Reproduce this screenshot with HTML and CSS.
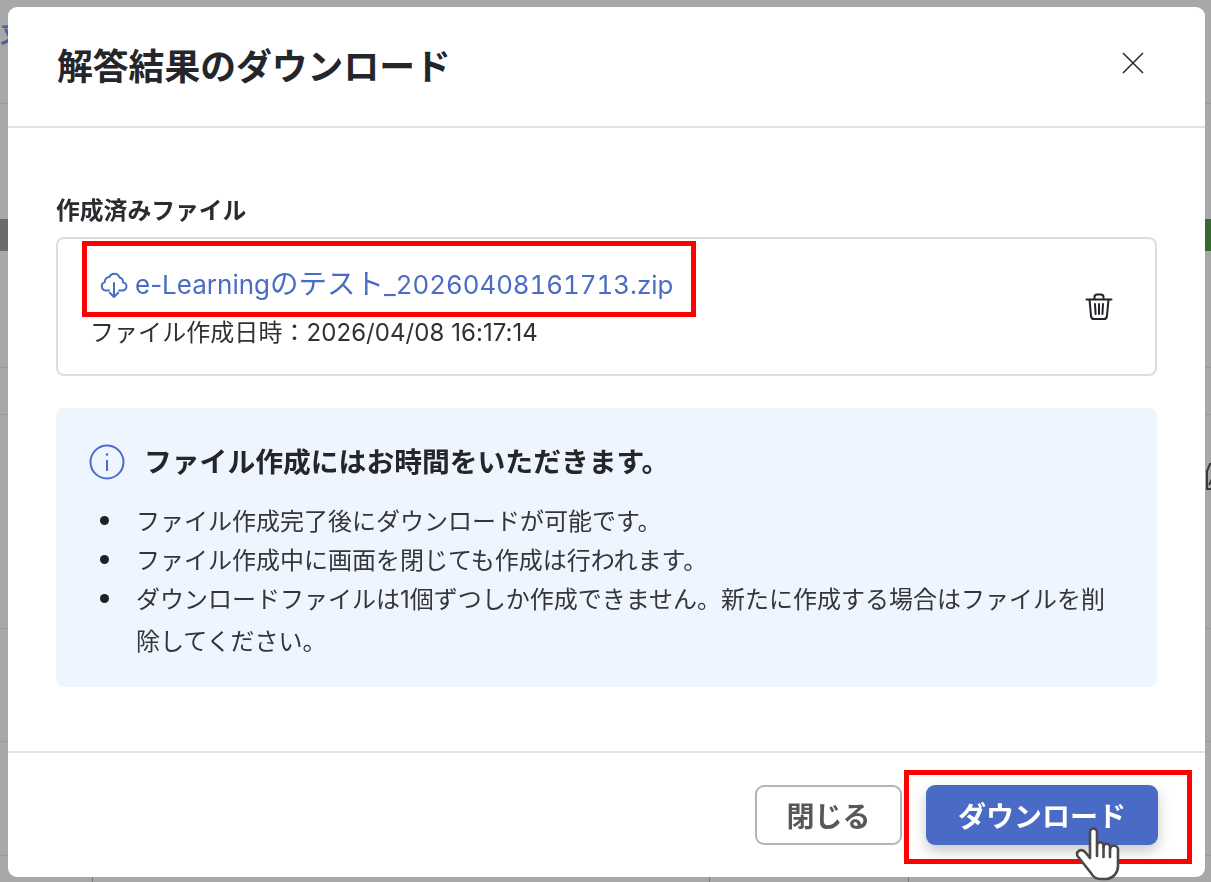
FILE: index.html
```html
<!DOCTYPE html>
<html lang="ja">
<head>
<meta charset="utf-8">
<title>解答結果のダウンロード</title>
<link rel="stylesheet" href="styles.css">
</head>
<body>
<div class="backdrop">
  <span class="bg-line bg-line-1"></span>
  <span class="bg-line bg-line-2"></span>
  <span class="bg-line bg-line-3"></span>
  <span class="bg-line bg-line-4"></span>
  <span class="bg-line bg-line-5"></span>
  <span class="bg-line bg-line-6"></span>
  <span class="bg-tick bg-tick-1"></span>
  <span class="bg-tick bg-tick-2"></span>
  <span class="bg-tick bg-tick-3"></span>
  <span class="bg-band bg-band-left"></span>
  <span class="bg-band bg-band-right"></span>
  <span class="bg-char">又</span>
  <svg class="bg-icon" viewBox="0 0 12 28" width="12" height="28" fill="none" stroke="#3a3b3e" stroke-width="2"><path d="M12 1H5L2 8v18h10M4 22l4-8 4 8"/></svg>
  <section class="modal">
    <header class="modal-header">
      <h1 class="modal-title">解答結果のダウンロード</h1>
      <svg class="close-icon" viewBox="0 0 24 24" width="24" height="24" fill="none" stroke="#2b2d31" stroke-width="1.6"><path d="M2 2 22 22M22 2 2 22"/></svg>
    </header>
    <div class="modal-body">
      <h2 class="field-label">作成済みファイル</h2>
      <div class="file-card">
        <div class="file-info">
          <a class="file-link">
            <svg class="cloud-icon" viewBox="0 0 28 28" width="28" height="28" fill="none" stroke="#4a6cc6" stroke-width="2" stroke-linecap="round" stroke-linejoin="round"><path d="M9 20.500H6a4.300 4.300 0 0 1-1.200-8.400A4.600 4.600 0 0 1 9.300 7 5.500 5.500 0 0 1 19.500 7.500a4.600 4.600 0 0 1 3.500 4.700 4.200 4.200 0 0 1-1.500 8.300H19"/><path d="M14 13v14M9.800 22.800 14 27l4.200-4.200"/></svg>
            <span class="file-name">e-Learning<span class="file-name-ja">のテスト</span><span class="file-name-num">_20260408161713.zip</span></span>
          </a>
          <p class="file-date">ファイル作成日時：2026/04/08 16:17:14</p>
        </div>
        <svg class="trash-icon" viewBox="0 0 28 28" width="28" height="28" fill="none" stroke="#1f2126" stroke-width="2" stroke-linecap="round" stroke-linejoin="round"><path d="M1.500 6.500h25M4.500 6.500l1.600 17a3 3 0 0 0 3 2.500h9.800a3 3 0 0 0 3-2.500l1.600-17M9.500 6V4a2.500 2.500 0 0 1 2.500-2.500h4A2.500 2.500 0 0 1 18.500 4v2M10 11l.6 10M14 11v10M18 11l-.6 10"/></svg>
      </div>
      <div class="notice">
        <div class="notice-head">
          <svg class="info-icon" viewBox="0 0 36 36" width="36" height="36" fill="none" stroke="#4a6cc6" stroke-width="2"><circle cx="18" cy="18" r="16.500"/><path d="M18 16v11"/><circle cx="18" cy="10.500" r="1.300" fill="#4a6cc6" stroke="none"/></svg>
          <strong class="notice-title">ファイル作成にはお時間をいただきます。</strong>
        </div>
        <ul class="notice-list">
          <li>ファイル作成完了後にダウンロードが可能です。</li>
          <li>ファイル作成中に画面を閉じても作成は行われます。</li>
          <li>ダウンロードファイルは1個ずつしか作成できません。新たに作成する場合はファイルを削除してください。</li>
        </ul>
      </div>
    </div>
    <footer class="modal-footer">
      <button class="btn btn-close">閉じる</button>
      <button class="btn btn-primary">ダウンロード</button>
    </footer>
  </section>
  <span class="highlight highlight-file"></span>
  <span class="highlight highlight-button"></span>
  <svg class="hand-cursor" viewBox="0 0 46 56" width="46" height="56" stroke="#4a4a4c" stroke-width="2.600" stroke-linejoin="round" stroke-linecap="round"><path fill="#fff" d="M15 32V6a3.500 3.500 0 0 1 7 0v13a3.300 3.300 0 0 1 6.500 0v2a3.200 3.200 0 0 1 6.500 0v2a3.300 3.300 0 0 1 8 1.500V40a13 13 0 0 1-11 13h-6c-5 0-8-2-10-6L2.500 30c-1-2.500 0-4.500 2-5.500 2.500-1 4.500 0 6 2z"/><path fill="none" d="M22 19v11M28.500 21v10M35 23v8"/></svg>
</div>
</body>
</html>
```
FILE: styles.css
```css
* { box-sizing: border-box; }
html, body { margin: 0; padding: 0; }
body {
  font-family: Inter, "Noto Sans CJK JP", sans-serif;
  color: #26282c;
}
.backdrop {
  position: relative;
  width: 1211px;
  height: 882px;
  overflow: hidden;
  background: #a7a8aa;
  padding: 7px 6px 5px 8px;
}
.bg-line { position: absolute; left: 0; right: 0; height: 1px; background: #98999b; }
.bg-line-1 { top: 103px; }
.bg-line-2 { top: 367px; }
.bg-line-3 { top: 414px; }
.bg-line-4 { top: 628px; }
.bg-line-5 { top: 741px; }
.bg-line-6 { top: 855px; }
.bg-tick { position: absolute; bottom: 0; height: 5px; width: 1px; background: #77787a; }
.bg-tick-1 { left: 92px; }
.bg-tick-2 { left: 709px; }
.bg-tick-3 { left: 908px; }
.bg-band { position: absolute; top: 219px; height: 32px; width: 8px; }
.bg-band-left { left: 0; background: #6a6b6f; }
.bg-band-right { right: 0; background: #356b2e; }
.bg-char { position: absolute; left: 0; top: 20px; font-size: 22px; font-weight: 700; line-height: 28px; color: #4a6199; }
.bg-icon { position: absolute; right: -6px; top: 463px; }
.modal {
  position: relative;
  height: 870px;
  background: #fff;
  border-radius: 9px;
  display: flex;
  flex-direction: column;
  filter: blur(.35px);
}
.modal-header {
  height: 121px;
  flex: none;
  border-bottom: 2px solid #e2e3e5;
  display: flex;
  align-items: center;
  justify-content: space-between;
  padding: 0 60px 0 49px;
}
.modal-title {
  margin: 0;
  font-size: 35.800px;
  line-height: 48px;
  font-weight: 700;
  color: #24262a;
}
.close-icon { margin-top: -8px; }
.modal-body {
  flex: 1;
  padding: 66px 48px 0 48px;
}
.field-label {
  margin: 0;
  font-size: 23.800px;
  line-height: 34px;
  font-weight: 700;
  color: #2a2c30;
}
.file-card {
  margin-top: 9px;
  height: 139px;
  border: 2px solid #dcdddf;
  border-radius: 8px;
  display: flex;
  align-items: center;
  justify-content: space-between;
  padding: 0 42px 0 33px;
}
.file-info { margin-top: -1px; }
.file-link {
  display: flex;
  align-items: center;
  gap: 7px;
  font-size: 26px;
  line-height: 40px;
  color: #4a6cc6;
  margin-left: 9px;
}
.file-name-ja { font-size: 28.500px; }
.file-name-num { font-size: 25.800px; font-variant-numeric: tabular-nums; }
.file-date {
  margin: 12px 0 0 -1px;
  font-size: 24px;
  line-height: 32px;
  letter-spacing: .06px;
  color: #2f3135;
}
.notice {
  margin-top: 32px;
  height: 279px;
  background: #eef5fe;
  border-radius: 8px;
  padding: 35px 40px 0 33px;
}
.notice-head { display: flex; align-items: center; gap: 19px; }
.notice-title {
  font-size: 27.800px;
  line-height: 38px;
  font-weight: 700;
  color: #24262a;
}
.notice-list {
  list-style: none;
  margin: 20px 0 0;
  padding: 0 0 0 47px;
  font-size: 24px;
  line-height: 42px;
  color: #34363a;
}
.notice-list li { position: relative; }
.notice-list li + li { margin-top: -3px; }
.notice-list li::before {
  content: "";
  position: absolute;
  left: -36px;
  top: 15px;
  width: 9px;
  height: 9px;
  border-radius: 50%;
  background: #1f2126;
}
.modal-footer {
  height: 126px;
  flex: none;
  border-top: 2px solid #e2e3e5;
  display: flex;
  align-items: flex-start;
  justify-content: flex-end;
  gap: 24px;
  padding: 32px 47px 0 0;
}
.btn {
  font-family: inherit;
  font-weight: 700;
  font-size: 28px;
  border-radius: 9px;
  height: 60px;
  padding: 0;
}
.btn-close {
  width: 147px;
  background: #fff;
  border: 2px solid #b3b4b7;
  color: #56585c;
}
.btn-primary {
  width: 232px;
  background: #4a6bc5;
  border: none;
  color: #fff;
  box-shadow: 0 6px 14px rgba(0, 0, 0, .22);
}
.highlight { position: absolute; border: 5px solid #f00; }
.highlight-file { left: 82px; top: 241px; width: 614px; height: 76px; }
.highlight-button { left: 904px; top: 770px; width: 288px; height: 94px; }
.hand-cursor { position: absolute; left: 1075px; top: 826px; }
```
